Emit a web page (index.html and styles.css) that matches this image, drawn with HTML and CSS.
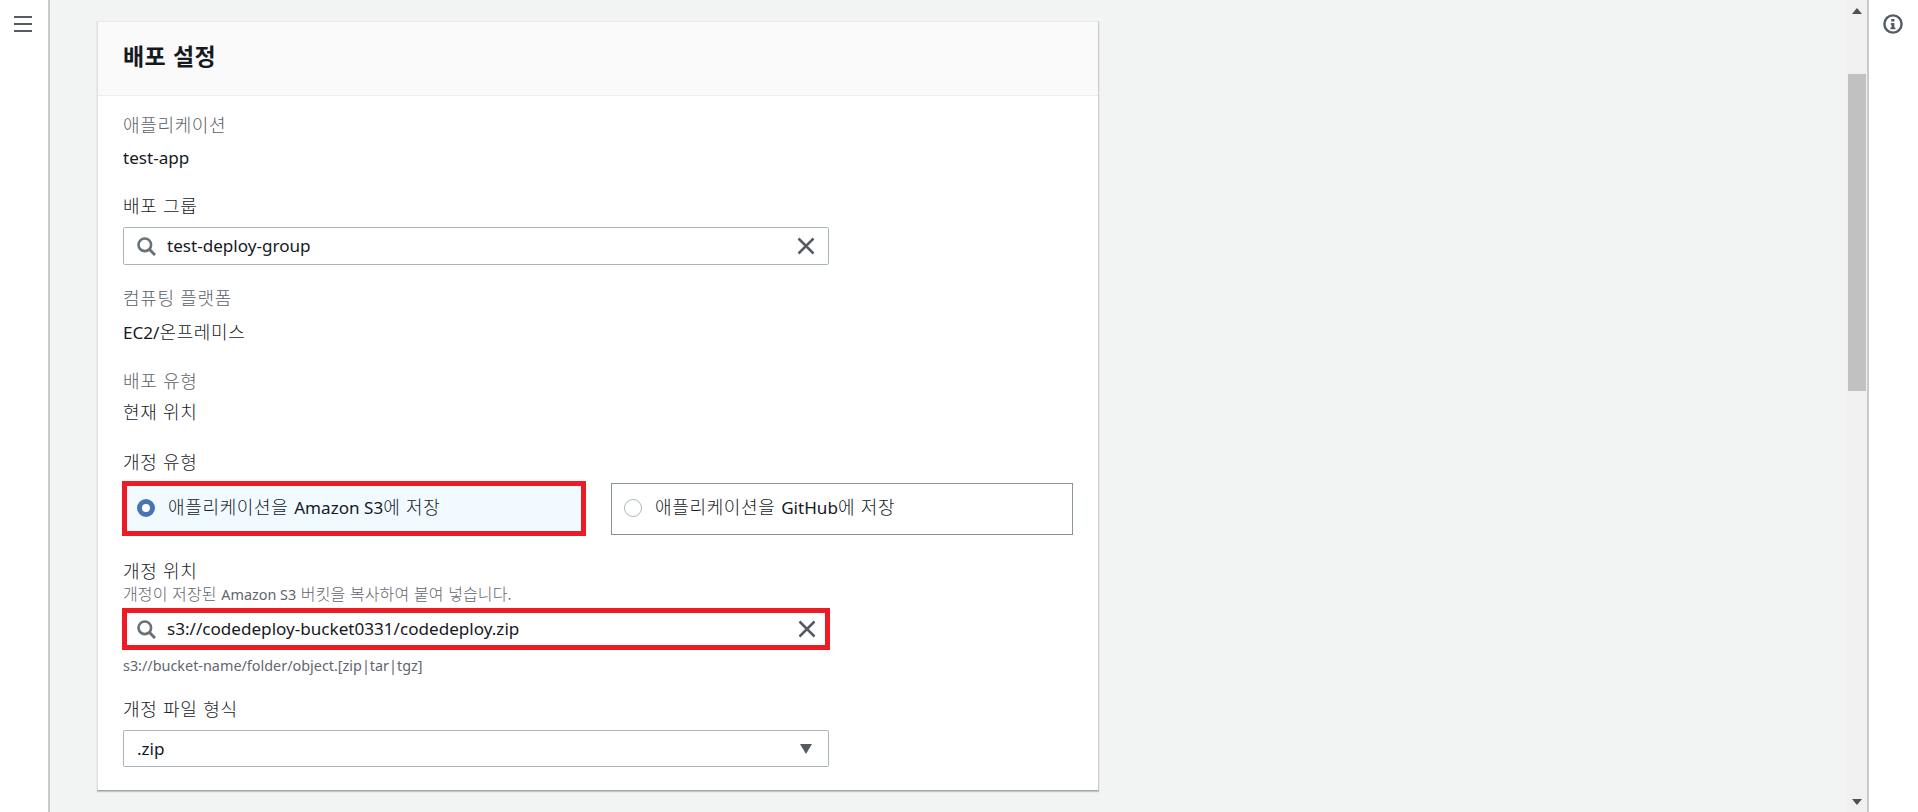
FILE: index.html
```html
<!DOCTYPE html>
<html lang="ko">
<head>
<meta charset="utf-8">
<title>배포 설정</title>
<link rel="stylesheet" href="styles.css">
</head>
<body>
<div class="shell">
  <nav class="rail rail-left">
    <svg class="icon-menu" width="20" height="20" viewBox="0 0 20 20"><path d="M1 2h18M1 9h18M1 16h18" fill="none" stroke="#545b64" stroke-width="2"/></svg>
  </nav>
  <main class="main">
    <section class="card">
      <header class="card-head"><h2>배포 설정</h2></header>
      <div class="card-body">
        <div class="field f-app">
          <div class="label muted">애플리케이션</div>
          <div class="value v-app"><span class="lat">test-app</span></div>
        </div>
        <div class="field f-group">
          <div class="label">배포 그룹</div>
          <div class="input">
            <svg class="search" width="19" height="19" viewBox="0 0 19 19"><circle cx="7.800" cy="7.800" r="6.300" fill="none" stroke="#687078" stroke-width="2.600"/><path d="M12.300 12.300L18 18" stroke="#687078" stroke-width="3"/></svg>
            <span class="input-text lat">test-deploy-group</span>
            <svg class="clear" width="18" height="18" viewBox="0 0 18 18"><path d="M1.500 1.500L16.500 16.500M16.500 1.500L1.500 16.500" stroke="#545b64" stroke-width="2.500"/></svg>
          </div>
        </div>
        <div class="field f-platform">
          <div class="label muted">컴퓨팅 플랫폼</div>
          <div class="value v-platform"><span class="lat">EC2/</span>온프레미스</div>
        </div>
        <div class="field f-type">
          <div class="label muted">배포 유형</div>
          <div class="value v-type">현재 위치</div>
        </div>
        <div class="field f-revtype">
          <div class="label">개정 유형</div>
          <div class="radios">
            <div class="radio radio-on"><span class="dot dot-on"></span><span>애플리케이션을 <span class="lat">Amazon S3</span>에 저장</span></div>
            <div class="radio radio-off"><span class="dot dot-off"></span><span>애플리케이션을 <span class="lat">GitHub</span>에 저장</span></div>
          </div>
        </div>
        <div class="field f-loc">
          <div class="label">개정 위치</div>
          <div class="desc">개정이 저장된 <span class="lat">Amazon S3</span> 버킷을 복사하여 붙여 넣습니다.</div>
          <div class="input input-marked">
            <svg class="search" width="19" height="19" viewBox="0 0 19 19"><circle cx="7.800" cy="7.800" r="6.300" fill="none" stroke="#687078" stroke-width="2.600"/><path d="M12.300 12.300L18 18" stroke="#687078" stroke-width="3"/></svg>
            <span class="input-text lat">s3://codedeploy-bucket0331/codedeploy.zip</span>
            <svg class="clear" width="18" height="18" viewBox="0 0 18 18"><path d="M1.500 1.500L16.500 16.500M16.500 1.500L1.500 16.500" stroke="#545b64" stroke-width="2.500"/></svg>
          </div>
          <div class="desc hint"><span class="lat">s3://bucket-name/folder/object.[zip|tar|tgz]</span></div>
        </div>
        <div class="field f-format">
          <div class="label">개정 파일 형식</div>
          <div class="input select">
            <span class="input-text lat">.zip</span>
            <svg class="caret" width="12" height="10" viewBox="0 0 12 10"><path d="M0 0H12L6 10Z" fill="#545b64"/></svg>
          </div>
        </div>
      </div>
    </section>
  </main>
  <div class="scrollbar">
    <svg class="arrow-up" width="10" height="6" viewBox="0 0 10 6"><path d="M5 0L10 6H0Z" fill="#505050"/></svg>
    <div class="thumb"></div>
    <svg class="arrow-down" width="10" height="6" viewBox="0 0 10 6"><path d="M0 0H10L5 6Z" fill="#505050"/></svg>
  </div>
  <aside class="rail rail-right">
    <svg class="icon-info" width="20" height="20" viewBox="0 0 20 20"><circle cx="10" cy="10" r="8.600" fill="none" stroke="#545b64" stroke-width="2.400"/><path d="M8.200 5h3.200v2.600H8.200zM7.800 9h3.600v4.400h1v1.800H7.400v-1.800h1.100v-2.600h-.7z" fill="#545b64"/></svg>
  </aside>
</div>
</body>
</html>
```
FILE: styles.css
```css
* { box-sizing: border-box; }
html, body { margin: 0; height: 812px; overflow: hidden; }
body {
  font-family: "Noto Sans CJK KR", sans-serif;
  font-size: 18px;
  font-weight: 300;
  letter-spacing: .65px;
  line-height: 22px;
  color: #16191f;
  background: #f2f3f3;
}
.lat {
  font-family: "Noto Sans", "Noto Sans CJK KR", sans-serif;
  font-size: 17.1px;
  font-weight: 400;
  letter-spacing: 0;
}
.shell { display: flex; height: 812px; }
.rail { background: #fff; flex: none; }
.rail-left { width: 50px; border-right: 2px solid #c8cbcb; padding: 15px 0 0 13px; }
.rail-right { width: 51px; border-left: 2px solid #c8cbcb; padding: 14px 0 0 14px; }
.icon-menu, .icon-info { display: block; }
.main { flex: 1; padding: 21px 0 0 47px; min-width: 0; }
.scrollbar {
  width: 20px; flex: none; background: #f0f0f0;
  display: flex; flex-direction: column; align-items: center;
  padding-top: 8px;
}
.arrow-up, .arrow-down { flex: none; }
.thumb { width: 18px; height: 317px; background: #c1c1c1; margin-top: 60px; }
.arrow-down { margin-top: auto; margin-bottom: 7px; }
.card {
  width: 1002px; height: 770px; background: #fff;
  border-left: 1px solid #dcdede;
  border-right: 1px solid #c9cccc;
  border-bottom: 1px solid #a0a5a5;
  border-top: 1px solid #e8e9e9;
  box-shadow: 0 1px 1px rgba(0,28,36,.2);
}
.card-head { height: 74px; background: #fafafa; border-bottom: 1px solid #eaeded; padding: 18px 25px 0; }
.card-head h2 { margin: 0; font-size: 23px; line-height: 30px; font-weight: 700; letter-spacing: .4px; }
.card-body { padding: 0 25px; }
.label, .value { height: 22px; line-height: 20px; white-space: nowrap; }
.muted { color: #5a6169; }
.f-app { padding-top: 18px; }
.v-app { margin-top: 10px; }
.f-group { margin-top: 27px; }
.input {
  width: 706px; height: 38px; margin-top: 10px;
  border: 1px solid #aab7b8; border-radius: 2px; background: #fff;
  display: flex; align-items: center; padding: 0 13px;
}
.search { flex: none; margin-right: 11px; }
.input-text { flex: 1; }
.clear { flex: none; margin-right: 0; }
.f-platform { margin-top: 22px; }
.v-platform { margin-top: 12px; }
.f-type { margin-top: 27px; }
.v-type { margin-top: 9px; }
.f-revtype { margin-top: 28px; }
.radios { display: flex; gap: 25px; margin-top: 8px; align-items: center; height: 55px; width: 951px; margin-left: -1px; }
.radio { display: flex; align-items: flex-start; gap: 13px; }
.radio-on { width: 464px; height: 55px; border: 5px solid #ed1c24; background: #f1faff; padding: 9px 9px 0 10px; }
.radio-off { width: 462px; height: 52px; border: 1px solid #879596; padding: 11px 13px 0 12px; }
.dot { width: 18px; height: 18px; border-radius: 50%; flex: none; margin-top: 4px; }
.dot-on { border: 5px solid #4a73b5; background: #fff; }
.dot-off { border: 1.5px solid #aab7b8; background: #fff; }
.f-loc { margin-top: 24px; }
.desc { height: 16px; font-size: 16px; letter-spacing: .12px; line-height: 16px; color: #5f666e; white-space: nowrap; }
.desc .lat { font-size: 14.4px; }
.f-loc .label + .desc { margin-top: 3px; }
.input-marked {
  width: 708px; height: 42px; margin: 7px 0 0 -1px;
  border: 5px solid #ed1c24; border-radius: 0; padding: 0 9px 0 10px;
}
.hint { margin-top: 6px; }
.f-format { margin-top: 26px; }
.select { height: 37px; padding: 0 14px 0 13px; }
.caret { flex: none; margin-right: 2px; }
```
